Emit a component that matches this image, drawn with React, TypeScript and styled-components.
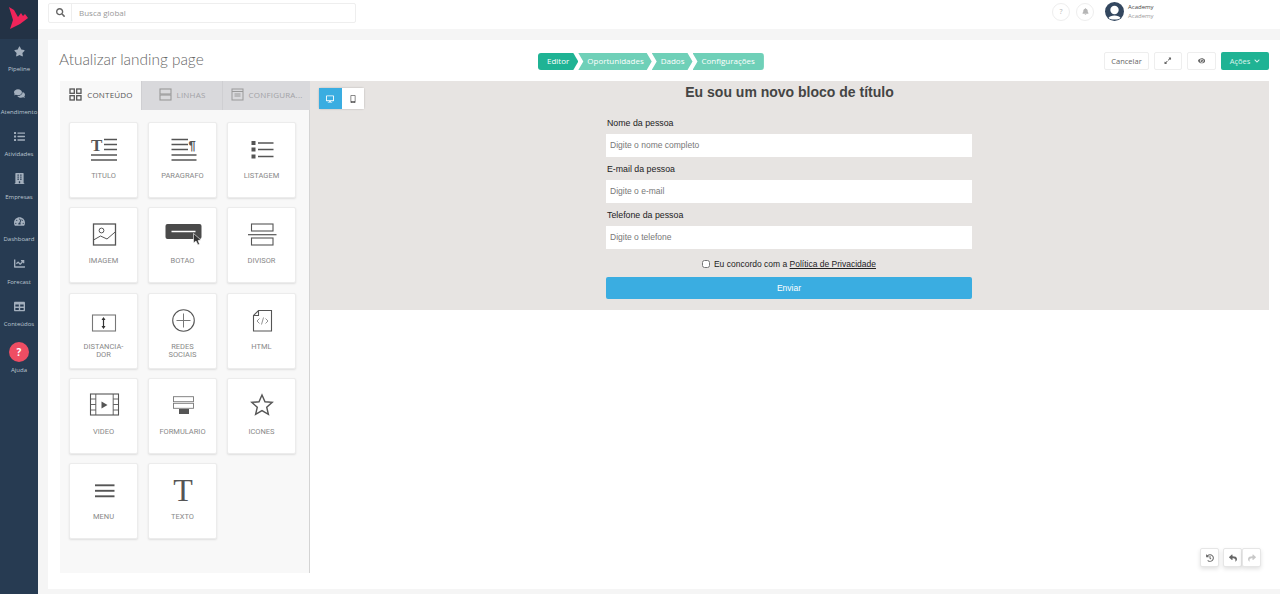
import React from 'react';
import styled, { createGlobalStyle } from 'styled-components';
import {
  FaBuilding,
  FaChartLine,
  FaComments,
  FaList,
  FaStar,
  FaTable,
  FaTachometerAlt,
  FaSearch,
  FaBell,
  FaEye,
  FaChevronDown,
  FaReply,
  FaShare,
  FaHistory,
  FaExpandAlt,
  FaDesktop,
  FaMobileAlt,
} from 'react-icons/fa';

const INK = '#555555';

const Line = ({ x1, x2, y, w = 1.5 }: { x1: number; x2: number; y: number; w?: number }) => (
  <line x1={x1} x2={x2} y1={y} y2={y} stroke={INK} strokeWidth={w} />
);

const ICONS: Record<string, React.ReactNode> = {
  titulo: (
    <>
      <text x="17" y="21" fontFamily="Liberation Serif" fontWeight="700" fontSize="17" fill={INK}>
        T
      </text>
      <Line x1={30} x2={43} y={9.5} />
      <Line x1={30} x2={43} y={14.5} />
      <Line x1={30} x2={43} y={19.5} />
      <Line x1={17} x2={43} y={25} />
      <Line x1={17} x2={43} y={30} />
    </>
  ),
  paragrafo: (
    <>
      <Line x1={18.5} x2={35} y={9.5} />
      <Line x1={18.5} x2={35} y={14.5} />
      <Line x1={18.5} x2={35} y={19.5} />
      <text x="35.5" y="20" fontFamily="Liberation Sans" fontWeight="700" fontSize="13" fill={INK}>
        ¶
      </text>
      <Line x1={18.5} x2={43.5} y={25} />
      <Line x1={18.5} x2={43.5} y={30} />
    </>
  ),
  listagem: (
    <>
      <rect x="19.5" y="11" width="4" height="4" fill={INK} />
      <rect x="19.5" y="17.5" width="4" height="4" fill={INK} />
      <rect x="19.5" y="24.5" width="4" height="4" fill={INK} />
      <Line x1={26} x2={41.5} y={13} />
      <Line x1={26} x2={41.5} y={19.5} />
      <Line x1={26} x2={41.5} y={26.5} />
    </>
  ),
  imagem: (
    <>
      <rect x="19.5" y="9" width="22" height="21" fill="none" stroke={INK} strokeWidth="1.3" />
      <circle cx="27.5" cy="15.5" r="2.4" fill="none" stroke={INK} strokeWidth="1" />
      <polyline points="19.5,25 26.5,21 33,24 41.5,16.7" fill="none" stroke={INK} strokeWidth="1" />
    </>
  ),
  botao: (
    <>
      <rect x="12.5" y="9" width="36" height="15" rx="2" fill="#4a4a4a" />
      <line x1="18.5" x2="42.5" y1="16.5" y2="16.5" stroke="#fff" strokeWidth="1.5" />
      <path d="M40.5 18.5 L40.5 28 L43 26 L45 30 L46.5 29 L45 25.5 L48 25 Z" fill="#333" stroke="#fff" strokeWidth="0.6" />
    </>
  ),
  divisor: (
    <>
      <rect x="19.5" y="9" width="21.5" height="7" fill="none" stroke={INK} strokeWidth="1.1" />
      <Line x1={16} x2={44.5} y={19.7} w={1.2} />
      <rect x="19.5" y="23" width="21.5" height="7" fill="none" stroke={INK} strokeWidth="1.1" />
    </>
  ),
  distanciador: (
    <>
      <rect x="18.5" y="14" width="23" height="16" fill="none" stroke="#777" strokeWidth="1.1" />
      <line x1="29.5" x2="29.5" y1="17" y2="27" stroke="#333" strokeWidth="1.2" />
      <path d="M27.5 19 L29.5 16 L31.5 19 Z M27.5 25 L29.5 28 L31.5 25 Z" fill="#333" />
    </>
  ),
  redes: (
    <>
      <circle cx="30.5" cy="19.5" r="10.8" fill="none" stroke={INK} strokeWidth="1.1" />
      <line x1="23.5" x2="37.5" y1="19.5" y2="19.5" stroke="#777" strokeWidth="1" />
      <line x1="30.5" x2="30.5" y1="12.5" y2="26.5" stroke="#777" strokeWidth="1" />
    </>
  ),
  html: (
    <>
      <path d="M26.5 9.5 H39.5 V30 H21.5 V14.5 Z M26.5 9.5 V14.5 H21.5" fill="none" stroke={INK} strokeWidth="1.1" />
      <path d="M27.5 17.5 L25 20 L27.5 22.5 M33.5 17.5 L36 20 L33.5 22.5 M31.5 16.5 L29.5 23.5" fill="none" stroke="#777" strokeWidth="0.8" />
    </>
  ),
  video: (
    <>
      <rect x="16.5" y="8" width="28" height="21" fill="none" stroke={INK} strokeWidth="1.1" />
      <path d="M21.8 8 V29 M39.2 8 V29 M16.5 13 H21.8 M16.5 18.5 H21.8 M16.5 24 H21.8 M39.2 13 H44.5 M39.2 18.5 H44.5 M39.2 24 H44.5" stroke={INK} strokeWidth="0.9" />
      <path d="M27.5 15.5 L33.5 19 L27.5 22.5 Z" fill={INK} />
    </>
  ),
  formulario: (
    <>
      <rect x="20.5" y="10.7" width="20" height="5" fill="none" stroke="#777" strokeWidth="0.9" />
      <rect x="20.5" y="17.3" width="20" height="5" fill="none" stroke="#777" strokeWidth="0.9" />
      <rect x="26" y="23" width="10" height="5" fill={INK} />
    </>
  ),
  icones: (
    <path
      d="M30 9 L33 15.8 L40.2 16.4 L34.7 21.2 L36.4 28.4 L30 24.6 L23.6 28.4 L25.3 21.2 L19.8 16.4 L27 15.8 Z"
      fill="none"
      stroke={INK}
      strokeWidth="1.4"
    />
  ),
  menu: (
    <>
      <Line x1={21} x2={40.5} y={14.3} w={1.9} />
      <Line x1={21} x2={40.5} y={19.8} w={1.9} />
      <Line x1={21} x2={40.5} y={25.3} w={1.9} />
    </>
  ),
  texto: (
    <text x="30" y="30" textAnchor="middle" fontFamily="Liberation Serif" fontSize="32" fill={INK}>
      T
    </text>
  ),
};

const BLOCKS = [
  { id: 'titulo', label: 'TITULO' },
  { id: 'paragrafo', label: 'PARAGRAFO' },
  { id: 'listagem', label: 'LISTAGEM' },
  { id: 'imagem', label: 'IMAGEM' },
  { id: 'botao', label: 'BOTAO' },
  { id: 'divisor', label: 'DIVISOR' },
  { id: 'distanciador', label: 'DISTANCIA-\nDOR' },
  { id: 'redes', label: 'REDES\nSOCIAIS' },
  { id: 'html', label: 'HTML' },
  { id: 'video', label: 'VIDEO' },
  { id: 'formulario', label: 'FORMULARIO' },
  { id: 'icones', label: 'ICONES' },
  { id: 'menu', label: 'MENU' },
  { id: 'texto', label: 'TEXTO' },
];

const NAV = [
  { label: 'Pipeline', icon: <FaStar /> },
  { label: 'Atendimento', icon: <FaComments /> },
  { label: 'Atividades', icon: <FaList /> },
  { label: 'Empresas', icon: <FaBuilding /> },
  { label: 'Dashboard', icon: <FaTachometerAlt /> },
  { label: 'Forecast', icon: <FaChartLine /> },
  { label: 'Conteúdos', icon: <FaTable /> },
];

const STEPS = ['Editor', 'Oportunidades', 'Dados', 'Configurações'];

const FIELDS = [
  { label: 'Nome da pessoa', placeholder: 'Digite o nome completo' },
  { label: 'E-mail da pessoa', placeholder: 'Digite o e-mail' },
  { label: 'Telefone da pessoa', placeholder: 'Digite o telefone' },
];

const App: React.FC = () => {
  return (
    <Page>
      <GlobalStyle />
      <Sidebar>
        <LogoBox>
          <svg width="22" height="24" viewBox="0 0 22 24">
            <path d="M1 1 L6 4 L10 11 L13 7 L15 10 L17 8 L20 12 L12 18 L2 23 L5 14 Z" fill="#f0245a" />
          </svg>
        </LogoBox>
        <NavList>
          {NAV.map((item) => (
            <NavItem key={item.label}>
              <NavIcon>{item.icon}</NavIcon>
              <NavLabel>{item.label}</NavLabel>
            </NavItem>
          ))}
          <HelpItem>
            <HelpBubble>?</HelpBubble>
            <HelpLabel>Ajuda</HelpLabel>
          </HelpItem>
        </NavList>
      </Sidebar>

      <Main>
        <TopBar>
          <SearchBox>
            <SearchIcon>
              <FaSearch />
            </SearchIcon>
            <SearchText>Busca global</SearchText>
          </SearchBox>
          <TopRight>
            <RoundButton>?</RoundButton>
            <RoundButton>
              <FaBell />
            </RoundButton>
            <Avatar>
              <svg width="19" height="19" viewBox="0 0 19 19">
                <circle cx="9.5" cy="9.5" r="9.5" fill="#33475f" />
                <circle cx="9.5" cy="8" r="4.2" fill="#fff" />
                <path d="M3.5 16 C4.5 12.5 14.5 12.5 15.5 16 C13.5 18 5.5 18 3.5 16 Z" fill="#fff" />
              </svg>
            </Avatar>
            <UserInfo>
              <UserName>Academy</UserName>
              <UserOrg>Academy</UserOrg>
            </UserInfo>
          </TopRight>
        </TopBar>

        <Content>
          <Header>
            <Title>Atualizar landing page</Title>
            <Steps>
              {STEPS.map((step, index) => (
                <Step key={step} $active={index === 0} $first={index === 0} $last={index === STEPS.length - 1}>
                  {step}
                </Step>
              ))}
            </Steps>
            <Actions>
              <GhostButton $width={45}>Cancelar</GhostButton>
              <GhostButton $width={28}>
                <FaExpandAlt />
              </GhostButton>
              <GhostButton $width={29}>
                <FaEye />
              </GhostButton>
              <PrimaryButton>
                Ações <FaChevronDown />
              </PrimaryButton>
            </Actions>
          </Header>

          <Workspace>
            <Panel>
              <Tabs>
                <Tab $active $width={80}>
                  <svg width="13" height="13" viewBox="0 0 13 13" fill="none" stroke="#555" strokeWidth="1.3">
                    <rect x="1" y="1" width="4.3" height="4.3" />
                    <rect x="7.7" y="1" width="4.3" height="4.3" />
                    <rect x="1" y="7.7" width="4.3" height="4.3" />
                    <rect x="7.7" y="7.7" width="4.3" height="4.3" />
                  </svg>
                  CONTEÚDO
                </Tab>
                <Tab $width={81}>
                  <svg width="13" height="13" viewBox="0 0 13 13" fill="none" stroke="#999" strokeWidth="1.1">
                    <rect x="1" y="1" width="11" height="5" />
                    <rect x="1" y="7" width="11" height="5" />
                  </svg>
                  LINHAS
                </Tab>
                <Tab $width={88}>
                  <svg width="13" height="13" viewBox="0 0 13 13" fill="none" stroke="#999" strokeWidth="1">
                    <rect x="1" y="1" width="11" height="11" />
                    <path d="M1 3.5 H12 M3.5 6 H9.5 M3.5 8 H9.5" />
                  </svg>
                  CONFIGURA...
                </Tab>
              </Tabs>
              <BlockGrid>
                {BLOCKS.map((block) => (
                  <BlockCard key={block.id}>
                    <svg width="60" height="40" viewBox="0 0 60 40">
                      {ICONS[block.id]}
                    </svg>
                    <BlockLabel>{block.label}</BlockLabel>
                  </BlockCard>
                ))}
              </BlockGrid>
            </Panel>

            <Stage>
              <DeviceToggle>
                <DeviceButton $active>
                  <FaDesktop />
                </DeviceButton>
                <DeviceButton>
                  <FaMobileAlt />
                </DeviceButton>
              </DeviceToggle>
              <Canvas>
                <CanvasTitle>Eu sou um novo bloco de título</CanvasTitle>
                <Form>
                  {FIELDS.map((field) => (
                    <Field key={field.label}>
                      <FieldLabel>{field.label}</FieldLabel>
                      <FieldInput placeholder={field.placeholder} readOnly />
                    </Field>
                  ))}
                  <Consent>
                    <ConsentBox type="checkbox" readOnly />
                    Eu concordo com a <ConsentLink>Política de Privacidade</ConsentLink>
                  </Consent>
                  <SubmitButton>Enviar</SubmitButton>
                </Form>
              </Canvas>
              <History>
                <HistoryButton>
                  <FaHistory />
                </HistoryButton>
                <HistoryGroup>
                  <HistoryButton>
                    <FaReply />
                  </HistoryButton>
                  <HistoryButton $muted>
                    <FaShare />
                  </HistoryButton>
                </HistoryGroup>
              </History>
            </Stage>
          </Workspace>
        </Content>
      </Main>
    </Page>
  );
};

export default App;

const GlobalStyle = createGlobalStyle`
  html, body {
    margin: 0;
    padding: 0;
    height: 100%;
    overflow: hidden;
  }

  * {
    box-sizing: border-box;
  }

  body {
    font-family: 'Open Sans', sans-serif;
    background: #f5f5f5;
  }
`;

const Page = styled.div`
  width: 1280px;
  height: 594px;
  display: flex;
  overflow: hidden;
`;

const Sidebar = styled.aside`
  width: 38px;
  flex-shrink: 0;
  background: #273b52;
  display: flex;
  flex-direction: column;
`;

const LogoBox = styled.div`
  height: 39px;
  background: #233245;
  display: flex;
  justify-content: center;
  align-items: center;
  padding: 0 0 4px 0;
`;

const NavList = styled.nav`
  display: flex;
  flex-direction: column;
  padding-top: 5px;
`;

const NavItem = styled.div`
  height: 42.5px;
  display: flex;
  flex-direction: column;
  align-items: center;
`;

const NavIcon = styled.div`
  height: 14px;
  display: flex;
  align-items: center;
  color: #a3afbd;
  font-size: 11px;
`;

const NavLabel = styled.span`
  margin-top: 7px;
  font-size: 6px;
  line-height: 8px;
  color: #bcc6d1;
  white-space: nowrap;
`;

const HelpItem = styled.div`
  display: flex;
  flex-direction: column;
  align-items: center;
`;

const HelpBubble = styled.div`
  width: 20px;
  height: 20px;
  border-radius: 50%;
  background: #ee4d63;
  color: #fff;
  font-size: 10px;
  font-weight: 700;
  display: flex;
  justify-content: center;
  align-items: center;
`;

const HelpLabel = styled(NavLabel)`
  margin-top: 4px;
`;

const Main = styled.main`
  flex: 1;
  display: flex;
  flex-direction: column;
  min-width: 0;
`;

const TopBar = styled.header`
  height: 29px;
  flex-shrink: 0;
  background: #fff;
  display: flex;
  align-items: flex-start;
  justify-content: space-between;
  padding: 3px 0 0 10px;
`;

const SearchBox = styled.div`
  width: 308px;
  height: 20px;
  border: 1px solid #eeeeee;
  border-radius: 2px;
  display: flex;
  align-items: center;
  padding-bottom: 1px;
`;

const SearchIcon = styled.div`
  width: 23px;
  height: 100%;
  border-right: 1px solid #eeeeee;
  display: flex;
  justify-content: center;
  align-items: center;
  color: #666;
  font-size: 9px;
`;

const SearchText = styled.span`
  margin-left: 7px;
  font-size: 8px;
  color: #999;
`;

const TopRight = styled.div`
  display: flex;
  align-items: center;
  width: 228px;
  height: 19px;
  margin-top: -1px;
`;

const RoundButton = styled.div`
  width: 18px;
  height: 18px;
  margin-right: 6px;
  border: 1px solid #eeeeee;
  border-radius: 50%;
  display: flex;
  justify-content: center;
  align-items: center;
  color: #b5b5b5;
  font-size: 7px;
`;

const Avatar = styled.div`
  width: 19px;
  height: 19px;
  margin-left: 5px;
  display: flex;
`;

const UserInfo = styled.div`
  margin-left: 4px;
  display: flex;
  flex-direction: column;
  line-height: 9px;
`;

const UserName = styled.span`
  font-size: 6px;
  color: #444;
`;

const UserOrg = styled.span`
  font-size: 6px;
  color: #999;
`;

const Content = styled.div`
  flex: 1;
  margin: 11px 0 5px 10px;
  background: #fff;
  display: flex;
  flex-direction: column;
  min-height: 0;
`;

const Header = styled.div`
  height: 41px;
  flex-shrink: 0;
  display: flex;
  align-items: flex-start;
  padding: 12px 11px 0 11px;
`;

const Title = styled.h1`
  width: 479px;
  margin: -1px 0 0;
  font-family: Lato, sans-serif;
  font-size: 15.4px;
  line-height: 17px;
  font-weight: 300;
  color: #666;
`;

const Steps = styled.div`
  display: flex;
  margin-top: 1px;
`;

const Step = styled.div<{ $active?: boolean; $first?: boolean; $last?: boolean }>`
  height: 17px;
  padding: 0 ${(p) => (p.$last || p.$first ? '9px' : '8px')} 0 9px;
  background: ${(p) => (p.$active ? '#1fb394' : '#6fd0b8')};
  color: #fff;
  font-size: 8px;
  line-height: 16px;
  white-space: nowrap;
  border-radius: ${(p) => (p.$first ? '3px 0 0 3px' : p.$last ? '0 3px 3px 0' : '0')};
  clip-path: ${(p) =>
    p.$first
      ? 'polygon(0 0, calc(100% - 5px) 0, 100% 50%, calc(100% - 5px) 100%, 0 100%)'
      : p.$last
        ? 'polygon(0 0, 100% 0, 100% 100%, 0 100%, 5px 50%)'
        : 'polygon(0 0, calc(100% - 5px) 0, 100% 50%, calc(100% - 5px) 100%, 0 100%, 5px 50%)'};
`;

const Actions = styled.div`
  margin-left: auto;
  display: flex;
  gap: 5px;
`;

const GhostButton = styled.div<{ $width: number }>`
  width: ${(p) => p.$width}px;
  height: 18px;
  border: 1px solid #eeeeee;
  border-radius: 2px;
  display: flex;
  justify-content: center;
  align-items: center;
  font-size: 7.5px;
  color: #666;
`;

const PrimaryButton = styled.div`
  width: 48px;
  height: 18px;
  border-radius: 2px;
  background: #1fb394;
  color: #dff5ef;
  font-size: 7.5px;
  display: flex;
  justify-content: center;
  align-items: center;
  gap: 4px;

  svg {
    font-size: 6px;
  }
`;

const Workspace = styled.div`
  flex: 1;
  display: flex;
  padding-left: 12px;
  min-height: 0;
`;

const Panel = styled.section`
  width: 250px;
  height: 492px;
  flex-shrink: 0;
  background: #f8f8f8;
  border-right: 1px solid #d4d4d4;
`;

const Tabs = styled.div`
  display: flex;
  height: 29px;
  padding-left: 1px;
`;

const Tab = styled.div<{ $active?: boolean; $width: number }>`
  width: ${(p) => p.$width}px;
  flex-shrink: 0;
  padding-bottom: 2px;
  background: ${(p) => (p.$active ? '#f8f8f8' : '#d9d9dc')};
  border-left: ${(p) => (p.$active ? 'none' : '1px solid #cfcfd2')};
  color: ${(p) => (p.$active ? '#555' : '#a2a2a6')};
  font-size: 8px;
  letter-spacing: 0.2px;
  white-space: nowrap;
  display: flex;
  align-items: center;
  justify-content: center;
  gap: 5px;
`;

const BlockGrid = styled.div`
  display: grid;
  grid-template-columns: repeat(3, 69px);
  grid-auto-rows: 76px;
  column-gap: 10px;
  row-gap: 9.25px;
  padding: 12px 0 0 9px;
`;

const BlockCard = styled.div`
  background: #fff;
  border: 1px solid #ececec;
  border-radius: 2px;
  box-shadow: 0 1px 2px rgba(0, 0, 0, 0.1);
  display: flex;
  flex-direction: column;
  align-items: center;
  padding-top: 7px;
`;

const BlockLabel = styled.span`
  margin-top: 2px;
  font-family: Roboto, sans-serif;
  font-size: 7.5px;
  line-height: 8px;
  color: #888;
  text-align: center;
  white-space: pre-line;
`;

const Stage = styled.section`
  position: relative;
  width: 959px;
  height: 492px;
  flex-shrink: 0;
`;

const DeviceToggle = styled.div`
  position: absolute;
  top: 7px;
  left: 9px;
  display: flex;
  border-radius: 2px;
  box-shadow: 0 0 2px rgba(0, 0, 0, 0.25);
`;

const DeviceButton = styled.div<{ $active?: boolean }>`
  width: 22.5px;
  height: 21px;
  background: ${(p) => (p.$active ? '#3aade1' : '#fff')};
  color: ${(p) => (p.$active ? '#fff' : '#666')};
  font-size: 8px;
  display: flex;
  justify-content: center;
  align-items: center;
`;

const Canvas = styled.div`
  height: 229px;
  background: #e7e4e2;
  display: flex;
  flex-direction: column;
  align-items: center;
  font-family: 'Liberation Sans', Arial, sans-serif;
`;

const CanvasTitle = styled.h2`
  margin: 3px 0 0;
  font-size: 14px;
  line-height: 17px;
  font-weight: 700;
  color: #444;
`;

const Form = styled.form`
  width: 366px;
  margin: 17px 1px 0 0;
  display: flex;
  flex-direction: column;
`;

const Field = styled.div`
  height: 46px;
  display: flex;
  flex-direction: column;
`;

const FieldLabel = styled.label`
  height: 11px;
  padding-left: 1px;
  font-size: 8.8px;
  line-height: 11px;
  color: #222;
`;

const FieldInput = styled.input`
  width: 100%;
  height: 23px;
  margin-top: 5px;
  padding: 0 4px 2px;
  border: none;
  outline: none;
  background: #fff;
  font-family: 'Liberation Sans', Arial, sans-serif;
  font-size: 8.5px;

  &::placeholder {
    color: #777;
  }
`;

const Consent = styled.div`
  margin-top: 1px;
  height: 14px;
  display: flex;
  justify-content: center;
  align-items: center;
  font-size: 8.5px;
  color: #222;
  white-space: pre;
`;

const ConsentBox = styled.input`
  width: 8px;
  height: 8px;
  margin: 0 4px 0 0;
`;

const ConsentLink = styled.span`
  text-decoration: underline;
`;

const SubmitButton = styled.div`
  height: 22px;
  margin-top: 6px;
  border-radius: 2px;
  background: #3aade1;
  color: #fff;
  font-size: 8.5px;
  display: flex;
  justify-content: center;
  align-items: center;
`;

const History = styled.div`
  position: absolute;
  right: 8px;
  bottom: 6px;
  display: flex;
  gap: 4px;
`;

const HistoryGroup = styled.div`
  display: flex;
`;

const HistoryButton = styled.div<{ $muted?: boolean }>`
  width: 19px;
  height: 19px;
  background: #fff;
  border: 1px solid #e6e6e6;
  border-radius: 2px;
  box-shadow: 0 2px 4px rgba(0, 0, 0, 0.12);
  color: ${(p) => (p.$muted ? '#c8c8c8' : '#666')};
  font-size: 8px;
  display: flex;
  justify-content: center;
  align-items: center;
`;
